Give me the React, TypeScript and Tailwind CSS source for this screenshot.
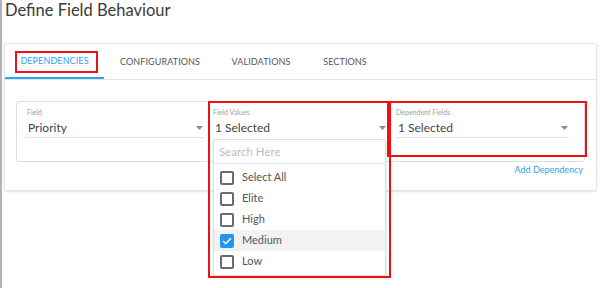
import React from "react";

const Caret = () => (
  <svg width="7" height="4" viewBox="0 0 7 4" className="shrink-0">
    <path d="M0 0 L7 0 L3.5 4 Z" fill="#8a8a8a" />
  </svg>
);

const Box = ({ checked }: { checked?: boolean }) =>
  checked ? (
    <div className="w-[14px] h-[14px] rounded-[2px] bg-[#2196f3] flex items-center justify-center">
      <svg width="10" height="8" viewBox="0 0 10 8">
        <path d="M1 4 L3.8 6.6 L9 1.2" stroke="white" strokeWidth="1.4" fill="none" />
      </svg>
    </div>
  ) : (
    <div className="w-[14px] h-[14px] rounded-[2px] border-2 border-[#6b6b6b] bg-white" />
  );

export default function App() {
  const items = [
    { label: "Select All" },
    { label: "Elite" },
    { label: "High" },
    { label: "Medium", checked: true },
    { label: "Low" },
  ];
  return (
    <div
      className="relative w-[602px] h-[288px] bg-white overflow-hidden border-l-2 border-[#b3b3b3]"
      style={{ fontFamily: "Lato, 'Open Sans', sans-serif" }}
    >
      <div className="absolute left-[-2px] top-[206px] w-[2px] h-[12px] bg-[#5fa67a]" />
      <div className="pl-[3px] pt-[0px] text-[16.5px] leading-[21px] text-[#3a3a3a]">
        Define Field Behaviour
      </div>
      <div className="ml-[2px] mr-[5px] mt-[22px] h-[148px] border border-[#e4e4e4] rounded-[2px] shadow-[0_1px_2px_rgba(0,0,0,0.12)]">
        <div className="flex h-[36px] border-b border-[#e4e4e4] text-[9px] tracking-[0.1px]">
          <div className="w-[99px] flex items-center justify-center text-[#2ea3f2] border-b-2 border-[#2ea3f2] pt-[1px]">
            DEPENDENCIES
          </div>
          <div className="w-[112px] flex items-center justify-center text-[#555] pt-[1px]">
            CONFIGURATIONS
          </div>
          <div className="w-[90px] flex items-center justify-center text-[#555] pt-[1px]">
            VALIDATIONS
          </div>
          <div className="w-[78px] flex items-center justify-center text-[#555] pt-[1px]">
            SECTIONS
          </div>
        </div>
        <div className="pl-[11px] pr-[11px] pt-[21px]">
          <div className="flex h-[61px] border border-[#dedede] rounded-[3px] pl-[9px] gap-[9px]">
            <div className="w-[178px]">
              <div className="pt-[5px] pl-[1px] text-[7px] leading-[10px] text-[#a0a0a0]">Field</div>
              <div className="flex items-center justify-between h-[20px] pl-[2px] pr-[1px] border-b border-[#e3e3e3] mt-[1px]">
                <span className="text-[12px] text-[#444] leading-[16px]">Priority</span>
                <Caret />
              </div>
            </div>
            <div className="w-[173px] relative">
              <div className="pt-[5px] text-[7px] leading-[10px] text-[#a0a0a0]">Field Values</div>
              <div className="flex items-center justify-between h-[20px] pl-[2px] pr-[0px] mt-[1px]">
                <span className="text-[12px] text-[#444] leading-[16px]">1 Selected</span>
                <Caret />
              </div>
              <div className="absolute left-0 top-[37px] w-[173px] bg-white border border-[#e0e0e0] shadow-[0_2px_2px_rgba(0,0,0,0.18)] z-10">
                <div className="h-[24px] flex items-center pl-[5px] border-b border-[#e6e6e6] text-[11.5px] text-[#bdbdbd]">
                  Search Here
                </div>
                <div className="pt-[3px] pb-[3px]">
                  {items.map((it) => (
                    <div
                      key={it.label}
                      className={
                        "h-[21px] flex items-center pl-[6px] gap-[8px] " +
                        (it.checked ? "bg-[#f2f2f2]" : "")
                      }
                    >
                      <Box checked={it.checked} />
                      <span className="text-[11px] text-[#555]">{it.label}</span>
                    </div>
                  ))}
                </div>
              </div>
            </div>
            <div className="w-[173px] ml-[1px]">
              <div className="pt-[5px] text-[7px] leading-[10px] text-[#a0a0a0]">Dependent Fields</div>
              <div className="flex items-center justify-between h-[20px] pl-[2px] pr-[1px] border-b border-[#e3e3e3] mt-[1px]">
                <span className="text-[12px] text-[#444] leading-[16px]">1 Selected</span>
                <Caret />
              </div>
            </div>
          </div>
          <div className="flex justify-end pr-[2px] pt-[1px] text-[9px] text-[#2ea3f2]">
            Add Dependency
          </div>
        </div>
      </div>
      <div className="absolute left-[13px] top-[51px] w-[83px] h-[22px] border-2 border-[#ee1111]" />
      <div className="absolute left-[206px] top-[101px] w-[183px] h-[177px] border-2 border-[#ee1111] z-20" />
      <div className="absolute left-[385px] top-[101px] w-[200px] h-[56px] border-2 border-[#ee1111] z-20" />
    </div>
  );
}
